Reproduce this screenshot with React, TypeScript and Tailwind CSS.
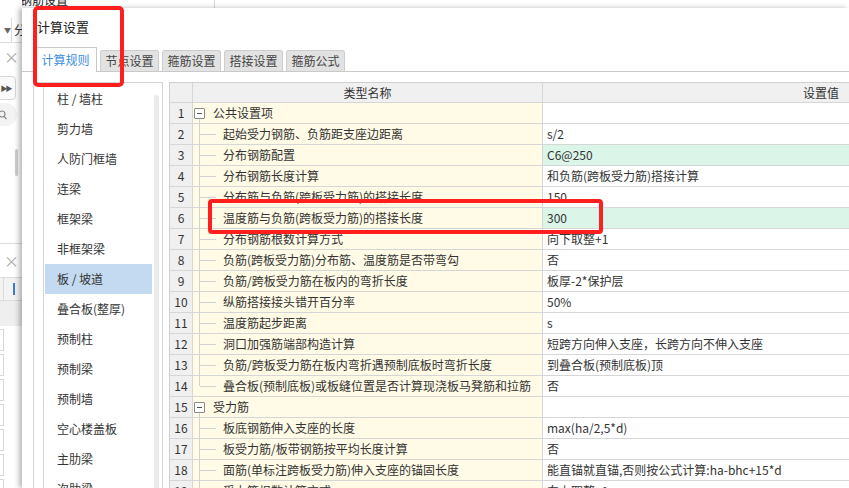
import clsx from "clsx";

type Row = {
  n: number;
  label: string;
  value?: string;
  group?: boolean;
  green?: boolean;
  last?: boolean;
};

const rows: Row[] = [
  { n: 1, label: "公共设置项", group: true },
  { n: 2, label: "起始受力钢筋、负筋距支座边距离", value: "s/2" },
  { n: 3, label: "分布钢筋配置", value: "C6@250", green: true },
  { n: 4, label: "分布钢筋长度计算", value: "和负筋(跨板受力筋)搭接计算" },
  { n: 5, label: "分布筋与负筋(跨板受力筋)的搭接长度", value: "150" },
  { n: 6, label: "温度筋与负筋(跨板受力筋)的搭接长度", value: "300", green: true },
  { n: 7, label: "分布钢筋根数计算方式", value: "向下取整+1" },
  { n: 8, label: "负筋(跨板受力筋)分布筋、温度筋是否带弯勾", value: "否" },
  { n: 9, label: "负筋/跨板受力筋在板内的弯折长度", value: "板厚-2*保护层" },
  { n: 10, label: "纵筋搭接接头错开百分率", value: "50%" },
  { n: 11, label: "温度筋起步距离", value: "s" },
  { n: 12, label: "洞口加强筋端部构造计算", value: "短跨方向伸入支座，长跨方向不伸入支座" },
  { n: 13, label: "负筋/跨板受力筋在板内弯折遇预制底板时弯折长度", value: "到叠合板(预制底板)顶" },
  { n: 14, label: "叠合板(预制底板)或板缝位置是否计算现浇板马凳筋和拉筋", value: "否", last: true },
  { n: 15, label: "受力筋", group: true },
  { n: 16, label: "板底钢筋伸入支座的长度", value: "max(ha/2,5*d)" },
  { n: 17, label: "板受力筋/板带钢筋按平均长度计算", value: "否" },
  { n: 18, label: "面筋(单标注跨板受力筋)伸入支座的锚固长度", value: "能直锚就直锚,否则按公式计算:ha-bhc+15*d" },
  { n: 19, label: "受力筋根数计算方式", value: "向上取整+1" },
];

const items = [
  "柱 / 墙柱",
  "剪力墙",
  "人防门框墙",
  "连梁",
  "框架梁",
  "非框架梁",
  "板 / 坡道",
  "叠合板(整厚)",
  "预制柱",
  "预制梁",
  "预制墙",
  "空心楼盖板",
  "主肋梁",
  "次肋梁",
];

const tabs = ["节点设置", "箍筋设置", "搭接设置", "箍筋公式"];

function GridRow({ r }: { r: Row }) {
  return (
    <div className="flex h-[21px] shrink-0 border-b border-[#d6d6d6]">
      <div className="flex w-[23px] shrink-0 items-center justify-center border-r border-[#d6d6d6] bg-[#f0f0f0]">
        {r.n}
      </div>
      <div className="relative flex w-[350px] shrink-0 items-center border-r border-[#d6d6d6] bg-[#fffbe6]">
        {r.group ? (
          <>
            <span className="absolute left-[1px] top-[5px] flex h-[11px] w-[11px] items-center justify-center rounded-[1px] border border-[#8a8a8a] bg-white">
              <span className="h-px w-[5px] bg-[#555]" />
            </span>
            <span className="absolute bottom-0 left-[6px] top-[16px] w-px bg-[#d2d2d2]" />
            <span className="pl-[20px]">{r.label}</span>
          </>
        ) : (
          <>
            <span
              className={clsx(
                "absolute left-[6px] top-0 w-px bg-[#d2d2d2]",
                r.last ? "h-[10px]" : "bottom-0"
              )}
            />
            <span className="absolute left-[7px] top-[10px] h-px w-[16px] bg-[#d2d2d2]" />
            <span className="whitespace-nowrap pl-[30px]">{r.label}</span>
          </>
        )}
      </div>
      <div
        className={clsx(
          "flex w-[556px] shrink-0 items-center whitespace-nowrap pl-[4px]",
          r.green ? "bg-[#dcf5e9]" : "bg-white"
        )}
      >
        {r.value}
      </div>
    </div>
  );
}

function BehindStrip() {
  return (
    <div className="flex w-[22px] shrink-0 flex-col overflow-hidden bg-white text-[#666]">
      <div className="h-[18px] shrink-0" />
      <div className="flex h-[25px] shrink-0 items-center border-b border-[#dcdcdc]">
        <span className="w-[13px] pl-[4px] text-[7px] leading-none">▼</span>
        <span className="h-[24px] border-l border-[#dcdcdc]" />
        <span className="ml-[2px] text-[12px] leading-none text-[#333]">分</span>
      </div>
      <div className="flex h-[27px] shrink-0 items-center justify-end pr-[3px] text-[15px] leading-none text-[#aaa]">
        ×
      </div>
      <div className="h-[33px] shrink-0 pt-[6px]">
        <div className="ml-[-5px] flex h-[24px] w-[21px] items-center justify-center rounded-[4px] border border-[#d8d8d8] bg-[#fafafa] text-[7px] tracking-[-2px] text-[#555]">
          ▶▶
        </div>
      </div>
      <div className="h-[26px] shrink-0">
        <div className="ml-[-8px] flex h-[23px] w-[25px] items-center justify-end rounded-r-full bg-[#f3f3f3] pr-[8px]">
          <svg width="10" height="10" viewBox="0 0 10 10">
            <circle cx="3" cy="4" r="3" fill="none" stroke="#888" strokeWidth="1.2" />
            <line x1="5" y1="6.5" x2="7.5" y2="9" stroke="#888" strokeWidth="1.2" />
          </svg>
        </div>
      </div>
      <div className="h-[20px] shrink-0" />
      <div className="ml-[15px] h-[27px] w-[3px] shrink-0 rounded bg-[#cfcfcf]" />
      <div className="h-[67px] shrink-0" />
      <div className="flex h-[34px] shrink-0 items-center justify-end border-t border-[#dcdcdc] pr-[3px] text-[15px] leading-none text-[#aaa]">
        ×
      </div>
      <div className="flex h-[24px] shrink-0 items-center border-y border-[#dcdcdc] bg-[#f3f3f3]">
        <span className="h-full w-[4px] border-r border-[#dcdcdc]" />
        <span className="ml-[9px] h-[12px] w-[2px] bg-[#3a7bd5]" />
      </div>
      <div className="h-[25px] shrink-0 bg-[#efefef]" />
      {Array.from({ length: 7 }).map((_, i) => (
        <div key={i} className="mt-[3px] h-[22px] w-[4px] shrink-0 border border-l-0 border-[#d8d8d8] bg-white" />
      ))}
    </div>
  );
}

export default function App() {
  return (
    <div className="relative flex h-[488px] w-[849px] overflow-hidden bg-white font-['Noto_Sans_CJK_SC','Microsoft_YaHei',sans-serif] text-[12px] text-[#333]">
      <BehindStrip />

      <div className="flex min-w-0 flex-1 flex-col">
        {/* app behind the dialog */}
        <div className="flex h-[8px] shrink-0 items-end overflow-hidden bg-white">
          <span className="ml-[-2px] text-[12px] leading-[16px] text-[#222]">钢筋设置</span>
          <span className="ml-[146px] h-full border-l border-[#d8d8d8]" />
        </div>

        {/* dialog */}
        <div className="relative z-10 flex min-h-0 flex-1 flex-col bg-white shadow-[-3px_0_5px_rgba(0,0,0,0.28)]">
          <div className="flex h-[38px] shrink-0 items-center pl-[15px] text-[13px] text-[#222]">
            计算设置
          </div>

          <div className="flex h-[26px] shrink-0 items-end border-b border-[#c9c9c9] pl-[12px]">
            <div className="mb-[-1px] flex h-[25px] w-[63px] items-center justify-center border border-b-0 border-[#c9c9c9] bg-white text-[#3b8de0]">
              计算规则
            </div>
            {tabs.map((t) => (
              <div
                key={t}
                className="ml-[3px] flex h-[21px] w-[59px] items-center justify-center rounded-t-[3px] border border-b-0 border-[#cdcdcd] bg-[#e2e2e2] text-[#444]"
              >
                {t}
              </div>
            ))}
          </div>

          <div className="flex min-h-0 flex-1 pl-[11px] pt-[10px]">
            {/* left category list */}
            <div className="flex w-[130px] shrink-0 border border-b-0 border-[#d4d4d4]">
              <div className="w-[9px] shrink-0" />
              <div className="flex min-w-0 flex-1 flex-col border-l border-[#d4d4d4] pt-[1px]">
                {items.map((it) => (
                  <div
                    key={it}
                    className={clsx(
                      "ml-[1px] mr-[2px] flex h-[30px] shrink-0 items-center whitespace-nowrap pl-[12px]",
                      it === "板 / 坡道" && "bg-[#c4daf0]"
                    )}
                  >
                    {it}
                  </div>
                ))}
              </div>
              <div className="mr-[3px] mt-[12px] w-[5px] shrink-0 rounded-t bg-[#ebebeb]" />
            </div>

            {/* settings grid */}
            <div className="ml-[6px] flex min-w-0 flex-1 flex-col overflow-hidden border-l border-t border-[#d0d0d0]">
              <div className="flex h-[20px] shrink-0 border-b border-[#d6d6d6] bg-[#f0f0f0]">
                <div className="w-[23px] shrink-0 border-r border-[#d6d6d6]" />
                <div className="flex w-[350px] shrink-0 items-center justify-center border-r border-[#d6d6d6]">
                  类型名称
                </div>
                <div className="flex w-[556px] shrink-0 items-center justify-center">设置值</div>
              </div>
              {rows.map((r) => (
                <GridRow key={r.n} r={r} />
              ))}
            </div>
          </div>
        </div>
      </div>

      {/* annotation boxes */}
      <div className="absolute left-[33px] top-[6px] z-20 h-[81px] w-[91px] rounded-[5px] border-[4px] border-[#ff1f1f]" />
      <div className="absolute left-[208px] top-[199px] z-20 h-[35px] w-[395px] rounded-[4px] border-[4px] border-[#ff1f1f]" />
    </div>
  );
}
